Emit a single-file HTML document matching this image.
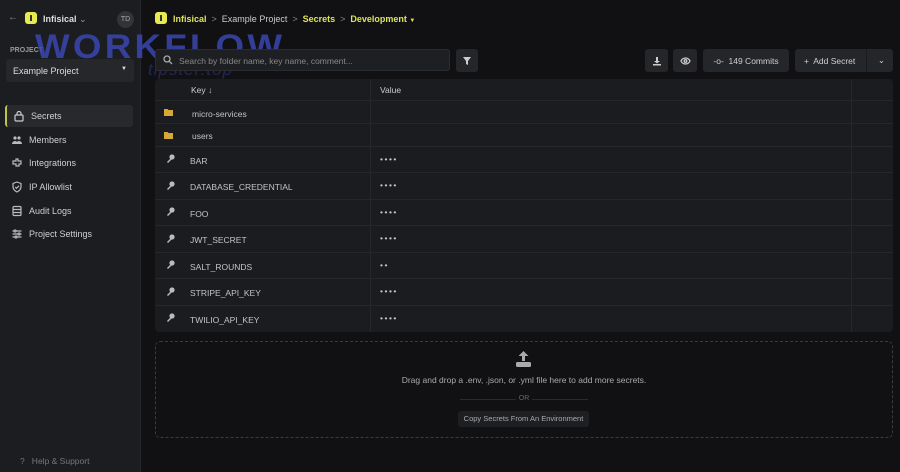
<!DOCTYPE html>
<html><head><style>
*{box-sizing:border-box;margin:0;padding:0}
body{width:900px;height:472px;background:#111114;font-family:"Liberation Sans",sans-serif;color:#c9c9cc;position:relative;overflow:hidden;font-size:9px}
.sb{position:absolute;left:0;top:0;width:141px;height:472px;background:#1c1d20;border-right:1px solid #26272a}
.abs{position:absolute}
.logo{width:12px;height:12px;border-radius:3px;background:#e8eb50;display:inline-block;position:relative}
.logo:after{content:"";position:absolute;left:5px;top:3px;width:2px;height:6px;background:#333}
.nav{position:absolute;left:5px;width:128px;height:22px;display:flex;align-items:center;padding-left:24px;font-size:9px;color:#d0d0d3}
.nav svg{position:absolute;left:6px;top:5px}
.btn{position:absolute;background:#25262a;border-radius:3px;height:23px;top:49px;display:flex;align-items:center;justify-content:center;color:#cfcfd2;font-size:8.5px}
.tbl{position:absolute;left:155px;top:79px;width:738px;height:253px;background:#1b1c1f;border-radius:4px}
.row{position:absolute;left:0;width:738px;border-top:1px solid #26272b}
.row span{position:absolute;font-size:8.5px;color:#c4c4c7}
.vl{position:absolute;top:0;bottom:0;width:1px;background:#26272b}
</style></head><body>
<div class="sb">
 <div class="abs" style="left:8px;top:12px;color:#888;font-size:10px">←</div>
 <div class="logo abs" style="left:25px;top:12px"></div>
 <div class="abs" style="left:43px;top:14px;font-size:9px;color:#ddd;font-weight:bold">Infisical <span style="font-weight:normal;color:#999">⌄</span></div>
 <div class="abs" style="left:117px;top:11px;width:17px;height:17px;border-radius:50%;background:#333438;color:#aaa;font-size:7px;text-align:center;line-height:17px">TD</div>
 <div class="abs" style="left:10px;top:47px;font-size:7px;color:#999;font-weight:bold">PROJECT</div>
 <div class="abs" style="left:6px;top:59px;width:128px;height:23px;background:#26272b;border-radius:3px;font-size:9px;color:#ddd;padding:7px 0 0 7px">Example Project<span style="position:absolute;right:7px;top:7px;font-size:6px">▼</span></div>
 <div class="nav" style="top:105px;background:#28292d;border-radius:3px;border-left:2px solid #c0c24a">
  <svg width="12" height="12" viewBox="0 0 12 12" fill="none" stroke="#ccc" stroke-width="1.2"><rect x="2" y="5" width="8" height="6" rx="1"/><path d="M4 5V3.5a2 2 0 014 0V5"/></svg>Secrets</div>
 <div class="nav" style="top:129px"><svg width="12" height="12" viewBox="0 0 12 12" fill="#bbb"><circle cx="4" cy="4" r="1.6"/><circle cx="8" cy="4" r="1.6"/><path d="M1 10a3 3 0 016 0zM5 10a3 3 0 016 0z"/></svg>Members</div>
 <div class="nav" style="top:152px"><svg width="12" height="12" viewBox="0 0 12 12" fill="none" stroke="#bbb" stroke-width="1.2"><path d="M2 4h3V2h2v2h3v3H8v2H5V7H2z"/></svg>Integrations</div>
 <div class="nav" style="top:176px"><svg width="12" height="12" viewBox="0 0 12 12" fill="none" stroke="#bbb" stroke-width="1.2"><path d="M6 1l4 1.5v3C10 8 8 10 6 11 4 10 2 8 2 5.5v-3z"/><path d="M4.2 6l1.3 1.3L8 4.8"/></svg>IP Allowlist</div>
 <div class="nav" style="top:200px"><svg width="12" height="12" viewBox="0 0 12 12" fill="none" stroke="#bbb" stroke-width="1.2"><rect x="2" y="1.5" width="8" height="9" rx="1"/><path d="M2 4.5h8M2 7.5h8"/></svg>Audit Logs</div>
 <div class="nav" style="top:223px"><svg width="12" height="12" viewBox="0 0 12 12" fill="none" stroke="#bbb" stroke-width="1.2"><path d="M1.5 3h9M1.5 6h9M1.5 9h9"/><circle cx="4" cy="3" r="1" fill="#1c1d20"/><circle cx="8" cy="6" r="1" fill="#1c1d20"/><circle cx="5" cy="9" r="1" fill="#1c1d20"/></svg>Project Settings</div>
 <div class="abs" style="left:20px;top:456px;font-size:8.5px;color:#777">?&nbsp;&nbsp; Help &amp; Support</div>
</div>
<div class="abs" style="left:35px;top:28px;font-size:34px;font-weight:bold;color:#3a47b0;opacity:.85;letter-spacing:3px;transform:scaleX(1.08);transform-origin:left">WORKFLOW</div>
<div class="abs" style="left:148px;top:60px;font-size:17px;font-style:italic;color:#2a3688;opacity:.6;letter-spacing:1px">tipster.top</div>

<div class="logo abs" style="left:155px;top:12px"></div>
<div class="abs" style="left:173px;top:14px;font-size:9px;color:#dfe25a;font-weight:bold">Infisical <span style="color:#888;font-weight:normal">&nbsp;&gt;&nbsp;</span> <span style="color:#ccc;font-weight:normal">Example Project</span> <span style="color:#888;font-weight:normal">&nbsp;&gt;&nbsp;</span> Secrets <span style="color:#888;font-weight:normal">&nbsp;&gt;&nbsp;</span> Development <span style="font-size:6px">▼</span></div>

<div class="abs" style="left:155px;top:49px;width:295px;height:22px;background:#1e1f22;border:1px solid #2b2c30;border-radius:3px"><svg class="abs" style="left:7px;top:5px" width="10" height="10" viewBox="0 0 10 10" fill="none" stroke="#aaa" stroke-width="1.3"><circle cx="4" cy="4" r="3"/><path d="M6.3 6.3L9 9"/></svg><span class="abs" style="left:23px;top:6px;color:#888;font-size:8.5px">Search by folder name, key name, comment...</span></div>
<div class="btn" style="left:456px;width:22px"><svg width="10" height="10" viewBox="0 0 10 10" fill="#ccc"><path d="M1 1h8L6 5v4L4 8V5z"/></svg></div>
<div class="btn" style="left:645px;width:23px"><svg width="10" height="10" viewBox="0 0 10 10" fill="#ccc"><path d="M4 1h2v4h2L5 7.5 2 5h2zM1 8h8v1.5H1z"/></svg></div>
<div class="btn" style="left:673px;width:24px"><svg width="11" height="10" viewBox="0 0 11 10" fill="none" stroke="#ccc" stroke-width="1.3"><path d="M1 5c2-4 7-4 9 0-2 4-7 4-9 0z"/><circle cx="5.5" cy="5" r="1.3"/></svg></div>
<div class="btn" style="left:703px;width:86px">-o-&nbsp; 149 Commits</div>
<div class="btn" style="left:795px;width:98px;justify-content:flex-start;padding-left:9px">+&nbsp; Add Secret<span style="position:absolute;left:71px;top:0;bottom:0;width:1px;background:#1a1b1e"></span><span style="position:absolute;right:8px;top:6px">⌄</span></div>

<div class="tbl">
 <span class="abs" style="left:36px;top:6px;font-size:8.5px;color:#ccc">Key ↓</span>
 <span class="abs" style="left:225px;top:6px;font-size:8.5px;color:#ccc">Value</span>
 <div class="vl" style="left:215px"></div><div class="vl" style="left:696px"></div>
 <div class="row" style="top:21px;height:23px"><svg class="abs" style="left:9px;top:8px" width="9" height="7"><path d="M0 0h3.5l1 1H9v6H0z" fill="#d6a83a"/></svg><span style="left:37px;top:8px">micro-services</span></div>
 <div class="row" style="top:44px;height:23px"><svg class="abs" style="left:9px;top:8px" width="9" height="7"><path d="M0 0h3.5l1 1H9v6H0z" fill="#d6a83a"/></svg><span style="left:37px;top:7px">users</span></div>
 <div class="row" style="top:67px"><span style="left:35px;top:9px">BAR</span><span style="left:225px;top:7px;letter-spacing:1.5px">••••</span></div>
 <div class="row" style="top:93px"><span style="left:35px;top:9px">DATABASE_CREDENTIAL</span><span style="left:225px;top:7px;letter-spacing:1.5px">••••</span></div>
 <div class="row" style="top:120px"><span style="left:35px;top:9px">FOO</span><span style="left:225px;top:7px;letter-spacing:1.5px">••••</span></div>
 <div class="row" style="top:146px"><span style="left:35px;top:9px">JWT_SECRET</span><span style="left:225px;top:7px;letter-spacing:1.5px">••••</span></div>
 <div class="row" style="top:173px"><span style="left:35px;top:9px">SALT_ROUNDS</span><span style="left:225px;top:7px;letter-spacing:1.5px">••</span></div>
 <div class="row" style="top:199px"><span style="left:35px;top:9px">STRIPE_API_KEY</span><span style="left:225px;top:7px;letter-spacing:1.5px">••••</span></div>
 <div class="row" style="top:226px"><span style="left:35px;top:9px">TWILIO_API_KEY</span><span style="left:225px;top:7px;letter-spacing:1.5px">••••</span></div>
</div>
<svg class="abs" style="left:165px;top:152px" width="12" height="180" fill="#bbb">
 <g id="k"><circle cx="7" cy="5" r="2.6"/><path d="M5.5 6.5L2 10l1 1 3.5-3.5z"/></g>
 <use href="#k" y="27"/><use href="#k" y="53"/><use href="#k" y="80"/><use href="#k" y="106"/><use href="#k" y="133"/><use href="#k" y="159"/>
</svg>

<div class="abs" style="left:155px;top:341px;width:738px;height:97px;border:1px dashed #3a3b40;border-radius:5px"></div>
<svg class="abs" style="left:515px;top:351px" width="17" height="16" fill="#aaa"><path d="M8.5 0l5 5h-3.5v5h-3V5H3.5z"/><rect x="1" y="11" width="15" height="5" rx="1.5"/></svg>
<div class="abs" style="left:155px;top:375px;width:738px;text-align:center;font-size:8.5px;color:#aaa">Drag and drop a .env, .json, or .yml file here to add more secrets.</div>
<div class="abs" style="left:460px;top:399px;width:128px;border-top:1px solid #2a2b2f"></div>
<div class="abs" style="left:516px;top:395px;width:16px;background:#111114;text-align:center;font-size:7px;color:#666">OR</div>
<div class="abs" style="left:458px;top:411px;width:131px;height:16px;background:#1e1f22;border-radius:3px;font-size:7.5px;color:#aaa;text-align:center;line-height:16px">Copy Secrets From An Environment</div>
</body></html>
